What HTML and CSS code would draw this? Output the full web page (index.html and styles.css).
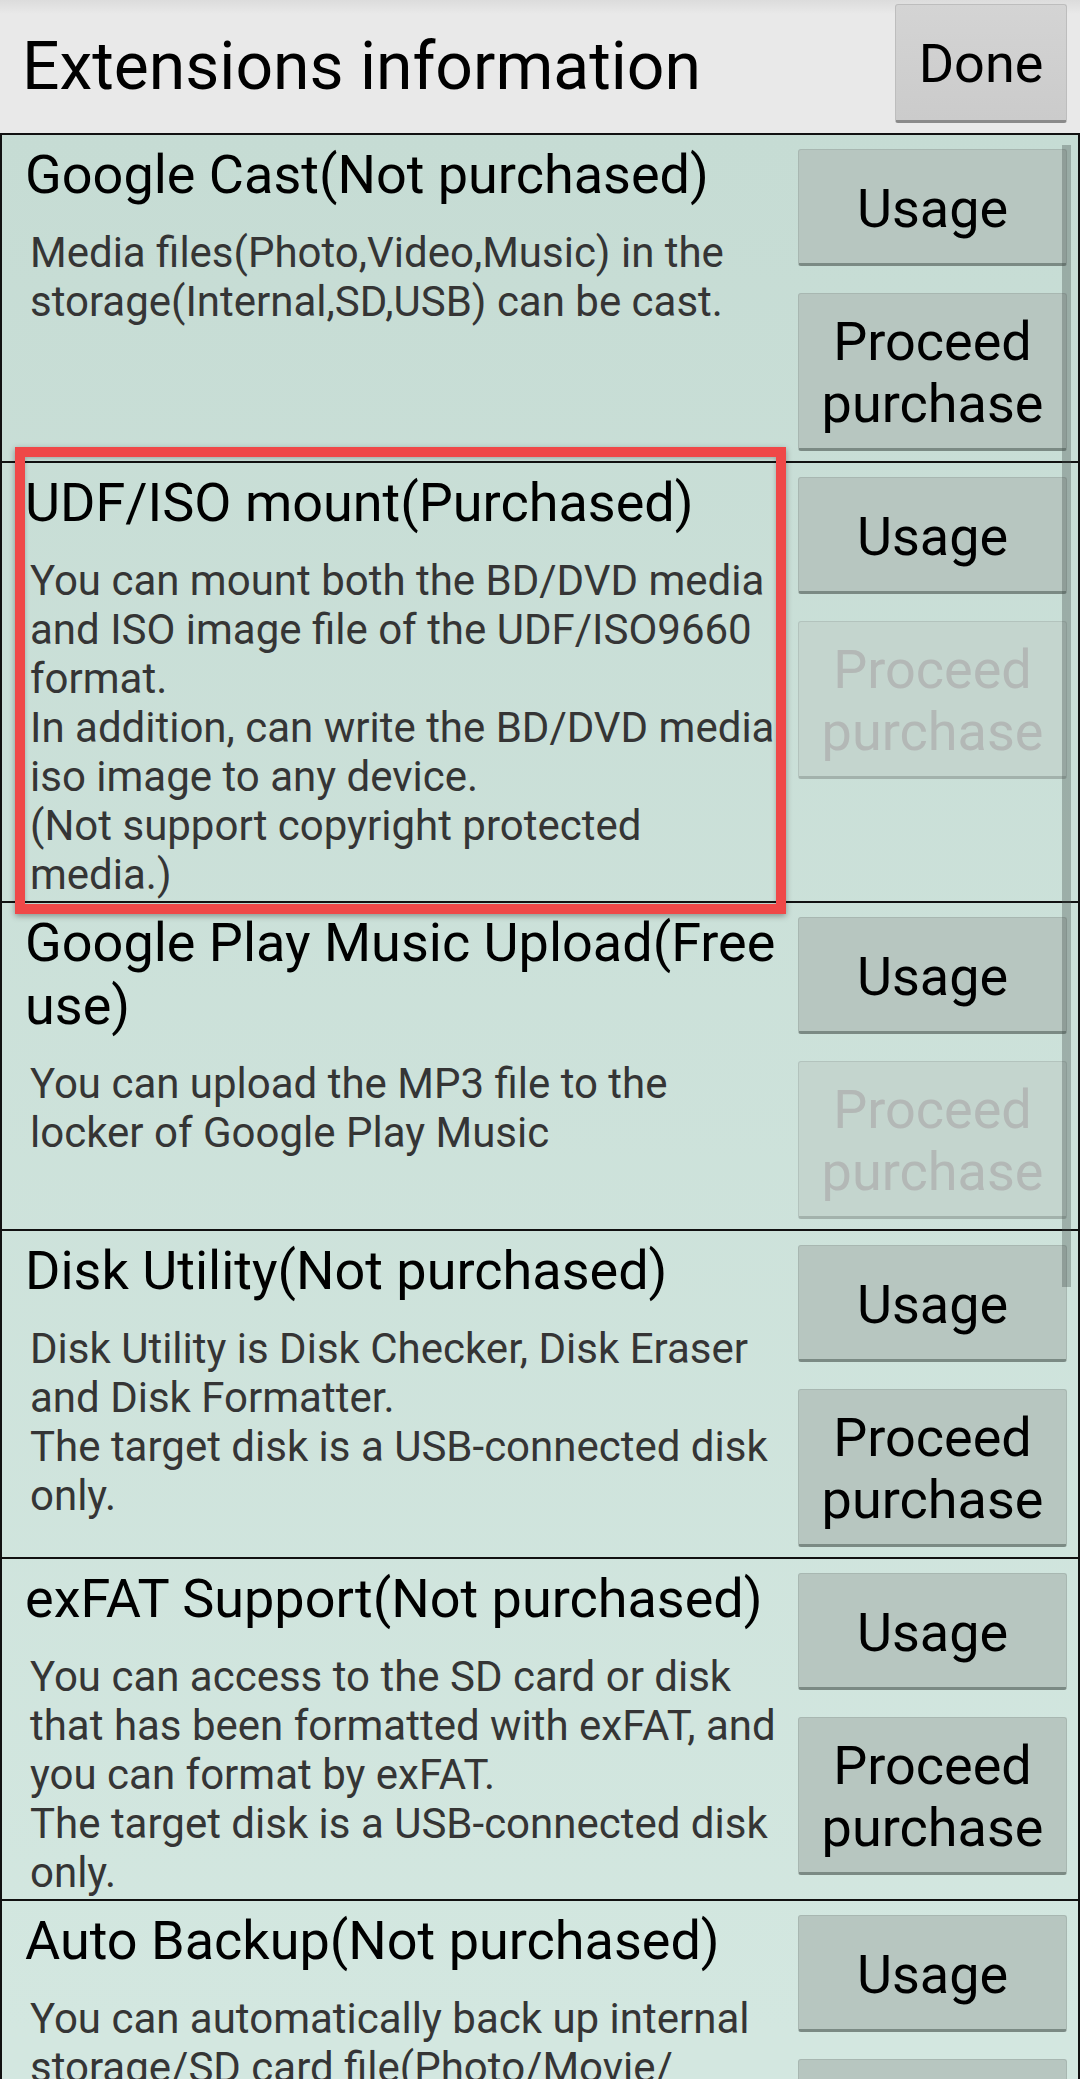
FILE: index.html
```html
<!DOCTYPE html>
<html lang="en">
<head>
	<meta charset="UTF-8">
	<meta name="viewport" content="width=device-width, initial-scale=1.0">
	<title>Extensions information</title>
	<link rel="stylesheet" href="styles.css">
</head>
<body>
	<header class="topbar">
		<h1>Extensions information</h1>
		<button class="btn btn-done">Done</button>
	</header>

	<main class="ext-list">
		<section class="ext">
			<div class="ext-info">
				<h2 class="ext-title">Google Cast(Not purchased)</h2>
				<p class="ext-desc">Media files(Photo,Video,Music) in the storage(Internal,SD,USB) can be cast.</p>
			</div>
			<div class="ext-actions">
				<button class="btn">Usage</button>
				<button class="btn btn-tall">Proceed<br>purchase</button>
			</div>
		</section>

		<section class="ext">
			<div class="ext-info">
				<h2 class="ext-title">UDF/ISO mount(Purchased)</h2>
				<p class="ext-desc">You can mount both the BD/DVD media and ISO image file of the UDF/ISO9660 format.<br>In addition, can write the BD/DVD media iso image to any device.<br>(Not support copyright protected media.)</p>
			</div>
			<div class="ext-actions">
				<button class="btn">Usage</button>
				<button class="btn btn-tall" disabled>Proceed<br>purchase</button>
			</div>
		</section>

		<section class="ext">
			<div class="ext-info">
				<h2 class="ext-title">Google Play Music Upload(Free use)</h2>
				<p class="ext-desc">You can upload the MP3 file to the locker of Google Play Music</p>
			</div>
			<div class="ext-actions">
				<button class="btn">Usage</button>
				<button class="btn btn-tall" disabled>Proceed<br>purchase</button>
			</div>
		</section>

		<section class="ext">
			<div class="ext-info">
				<h2 class="ext-title">Disk Utility(Not purchased)</h2>
				<p class="ext-desc">Disk Utility is Disk Checker, Disk Eraser and Disk Formatter.<br>The target disk is a USB-connected disk only.</p>
			</div>
			<div class="ext-actions">
				<button class="btn">Usage</button>
				<button class="btn btn-tall">Proceed<br>purchase</button>
			</div>
		</section>

		<section class="ext">
			<div class="ext-info">
				<h2 class="ext-title">exFAT Support(Not purchased)</h2>
				<p class="ext-desc">You can access to the SD card or disk that has been formatted with exFAT, and you can format by exFAT.<br>The target disk is a USB-connected disk only.</p>
			</div>
			<div class="ext-actions">
				<button class="btn">Usage</button>
				<button class="btn btn-tall">Proceed<br>purchase</button>
			</div>
		</section>

		<section class="ext">
			<div class="ext-info">
				<h2 class="ext-title">Auto Backup(Not purchased)</h2>
				<p class="ext-desc">You can automatically back up internal storage/SD card file(Photo/Movie/<wbr>Music/Document) to the USB device.</p>
			</div>
			<div class="ext-actions">
				<button class="btn">Usage</button>
				<button class="btn btn-tall">Proceed<br>purchase</button>
			</div>
		</section>

		<div class="scroll-thumb"></div>
	</main>

	<div class="highlight"></div>
</body>
</html>
```

FILE: styles.css
```css
html {
	box-sizing: border-box;
}

*, *:before, *:after {
	box-sizing: inherit;
}

body {
	margin: 0;
	padding: 0;
	height: 2079px;
	overflow: hidden;
	position: relative;
	font-family: Roboto, "Liberation Sans", sans-serif;
	background: #d2e6df;
	color: #000;
}

.topbar {
	display: flex;
	align-items: center;
	justify-content: space-between;
	height: 133px;
	padding: 0 13px 0 22px;
	background: linear-gradient(#dcdcdc, #e9e9e9 14px, #e9e9e9);
}

.topbar h1 {
	margin: 0;
	font-size: 66px;
	font-weight: 400;
	line-height: 1.17;
}

.btn {
	display: block;
	width: 100%;
	height: 117px;
	padding: 4px 0 0;
	margin: 0;
	font-family: inherit;
	font-size: 54px;
	line-height: 62px;
	color: #000;
	background: #b7c6c0;
	border: 1px solid #a8b7b1;
	border-bottom: 3px solid #7b8a84;
	border-radius: 3px;
}

.btn-tall {
	height: 158px;
}

.btn[disabled] {
	color: #b3b8b6;
	background: #c4d5ce;
	border-color: #b3c3bd;
	border-bottom-color: #a3b2ac;
}

.btn-done {
	width: 172px;
	height: 119px;
	margin-top: -7px;
	background: linear-gradient(#d4d4d4, #cbcbcb);
	border-color: #bdbdbd;
	border-bottom-color: #8a8a8a;
}

.ext-list {
	position: relative;
	border-left: 2px solid #111;
	border-right: 2px solid #111;
	background: linear-gradient(#c6dcd4, #d3e7e0 1900px);
}

.ext {
	display: flex;
	gap: 13px;
	border-top: 2px solid #111;
}

.ext-info {
	flex: 1;
	min-width: 0;
	padding: 8px 0 2px 23px;
}

.ext-title {
	margin: 0;
	font-size: 54px;
	font-weight: 400;
	line-height: 63px;
}

.ext-desc {
	margin: 22px 0 0 5px;
	font-size: 42px;
	line-height: 49px;
	color: #353535;
}

.ext-actions {
	flex: none;
	display: flex;
	flex-direction: column;
	gap: 27px;
	width: 269px;
	margin-right: 11px;
	padding: 14px 0 10px;
}

.scroll-thumb {
	position: absolute;
	top: 12px;
	right: 7px;
	width: 9px;
	height: 1142px;
	background: rgba(70, 80, 76, 0.35);
}

.highlight {
	position: absolute;
	left: 15px;
	top: 447px;
	width: 771px;
	height: 467px;
	border: 10px solid #ef4848;
	box-shadow: 0 2px 6px rgba(0, 0, 0, 0.35), inset 0 1px 4px rgba(0, 0, 0, 0.25);
}
```
